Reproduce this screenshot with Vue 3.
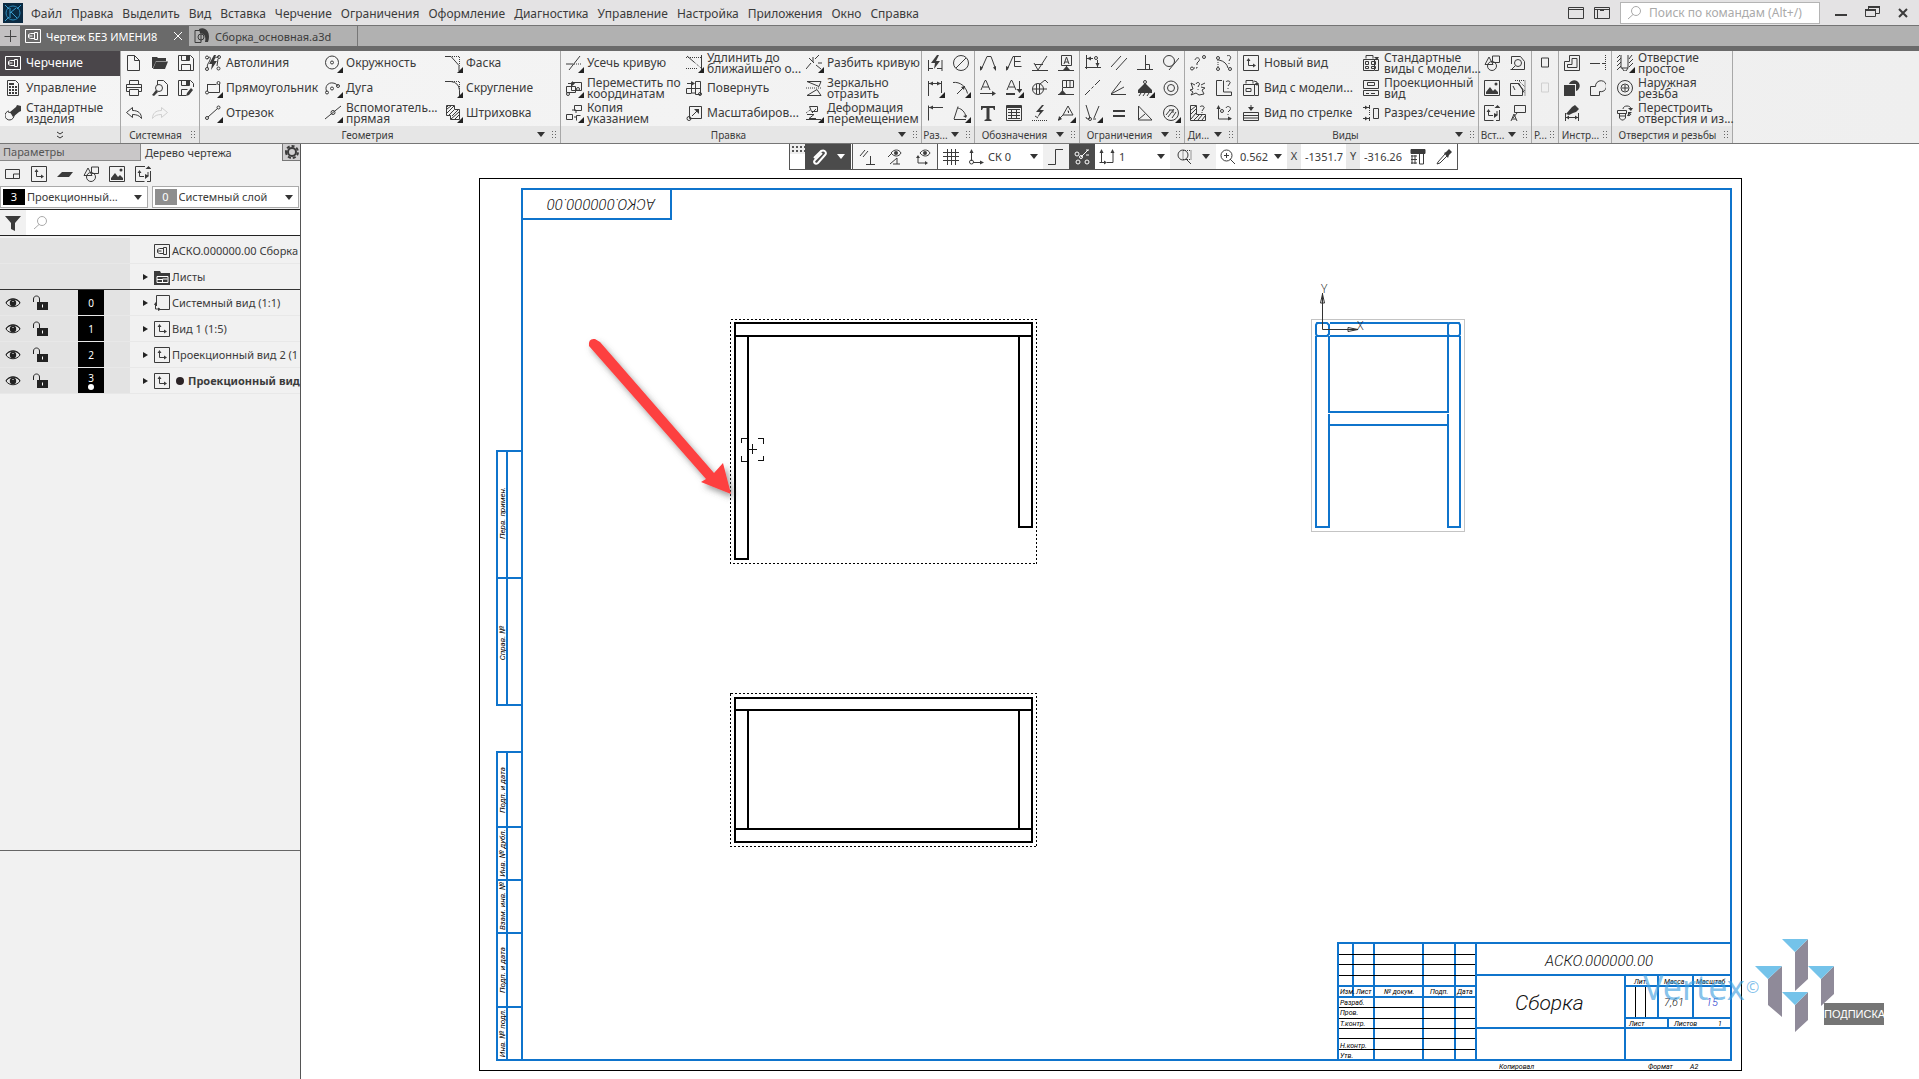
<script setup>
import { h } from 'vue'

const ring = (x, y, r) => `M${x - r} ${y}a${r} ${r} 0 1 0 ${2 * r} 0a${r} ${r} 0 1 0 ${-2 * r} 0`
const box = (x, y, w, t) => `M${x} ${y}h${w}v${t}h${-w}z`

/* Each icon lives on a 16 x 16 grid: s = stroked path, f = filled path, d = dashed path, w = white path */
const icons = {
  draft: { s: box(0.5, 1.5, 15, 13) + 'M9.5 5.5h-4l-2 1v3l2 1h4M3.5 8h4' + box(9.5, 4.5, 3, 7) },
  calc: { s: 'M2.5.5h8l3 3v12h-11z', f: box(4, 3, 5, 2) + [6, 9, 12].map(y => box(4, y, 2, 2) + box(7, y, 2, 2) + box(10, y, 2, 2)).join('') },
  bolt: { s: 'M4 6a4.5 4.5 0 1 0 5 4l-2-2-4-1', f: 'M5 7l6-5 1-2 4 1v5l-2 1-6 5z' },
  page: { s: 'M1.5.5h7l5 5v10h-12zM8.5.5v5h5' },
  folder: { f: 'M0 2h5l1 1h8v3H4L1 13H0zM4 6.5h12L13 14H1z' },
  save: { s: 'M.5.5h12l3 3v12H.5zM3.5.5v5h8v-5M3.5 15.5v-6h9v6', f: box(8, 1, 3, 4) },
  print: { s: 'M3.5 4.5v-4h9v4M3.5 11.5h-3v-7h15v7h-3' + box(3.5, 9.5, 9, 6) + 'M1 7.5h14' },
  preview: { s: 'M5.5 5V.5h6l4 4v11h-9' + ring(7, 8, 3.5), f: 'M4 10l2 2-4 4-2-1z' },
  saveas: { s: 'M8 15.5H.5V.5h12l3 3V7M3.5.5v5h8v-5M3.5 15.5v-6h6', f: box(8, 1, 3, 4) + 'M8 16l1-3 4-5 2 2-4 5z' },
  undo: { s: 'M6.5 2.5l-6 5 6 5v-3c4 0 7 1 9 4 0-5-3-8-9-8z' },
  redo: { s: 'M9.5 2.5l6 5-6 5v-3c-4 0-7 1-9 4 0-5 3-8 9-8z' },
  auto: { s: 'M2 4c3-3 4-2 3 1s-4 5-2 8M9 3c2 0 4-2 5-1' + ring(2, 2.5, 1.5) + ring(14, 2, 1.5) + ring(2, 14, 1.5) + ring(13.5, 13.5, 1.5) + 'M13 4l-1 7', f: 'M9 0L4 9h3l-1 6 6-9H9l2-6z' },
  rect: { s: 'M2 4.5h9.5M3.5 12.5H14.5V4M2.5 4v7' + ring(13.5, 3, 1.5) + ring(2, 12.5, 1.5) },
  line: { s: ring(2, 13, 1.5) + ring(13.5, 2.5, 1.5) + 'M3 12L12.5 3.5' },
  circle: { s: ring(7, 7.5, 6.5) + ring(7, 7.5, 1.5) },
  arc: { s: 'M2 12C-1 7 3 2 8 3c3 0 5 3 5 3' + ring(7, 8.5, 1.5) + ring(2, 12.5, 1.5) + ring(13, 6, 1.5) },
  aux: { s: 'M0 14L16 1' + ring(8, 7.5, 2) },
  fillet: { s: 'M0 1.5h6l8 9V16', d: 'M7 1.5h7.5v9' },
  round: { s: 'M0 1.5h6q8 1 8.5 9V16', d: 'M7 1.5h7.5v9' },
  hatch: { s: 'M1.5.5h8v4h5v10h-9v-4h-4zM2 4l4-3M2 8l7-7M4 10l5-5M7 11l6-6M6 14l8-7M9 15l5-5M3 1l-1 1' },
  trim: { s: 'M0 9h7M3 15L14 1', d: 'M8 9h8' },
  extend: { s: 'M1 1l7 6M15.5 0v15', d: 'M8 7l7 6M0 2.5h15M0 13.5h12' },
  split: { s: 'M0 14l5-6M9 4l4-4M8 8l-5-5M12 8h4M10 10l5 4M7 7v-5' },
  move: { s: 'M5.5 2.5h10v8h-10zM.5 6.5h9v6h-9z' + ring(2, 14, 1.5) + ring(12, 9, 1.5), f: 'M2 3h4V1l3 2.5L6 6V4H2z' },
  copy: { s: box(8.5, 0.5, 7, 5) + 'M10 8v-3h-4' + box(0.5, 9.5, 6, 5) + 'M14.5 10.5h-4v5M8 12h3' },
  rotate: { s: 'M9.5 1.5h5v13h-5zM.5 8.5h14M5.5 13.5h-5v-5M5.5 4v9h4' + ring(14, 14, 1.5), f: 'M1 3h4V1l4 2.5L5 6V4H1z' },
  scale: { s: box(3.5, 1.5, 12, 12) + ring(3, 13.5, 2) + 'M6 11l6-6', f: 'M8 4h5v5z' },
  mirror: { s: 'M1 1.5h14l-2 5zM1 15.5h14l-4-6z', d: 'M0 8h16' },
  deform: { s: 'M3.5 1.5h8v5h-6zM0 14.5h15M1 9.5h7l-5 4h7M6 8l4-4', d: 'M0 8l4-3' },
  adim: { s: 'M1.5 5v11M15 5v11M2 13.5h4M10 13.5h5', f: 'M10 0L4 8h4l-1 6 6-8H9l3-6z' },
  diam: { s: ring(8, 8, 7.5) + 'M3 13L13 3' },
  dim: { s: 'M1.5 1v15M14.5 1v12M2 3.5h12', f: 'M2 3.5l4-2v4zM14 3.5l-4-2v4z' },
  radius: { s: 'M0 2.5c7-1 13 4 14.5 11M4 14L12 6', f: 'M12 6l-1 4-3-3z' },
  linedim: { s: 'M1.5.5v15M2 2.5h14', f: 'M2 2.5l4-2v4z' },
  angle: { s: 'M1 14.5h12M1 14L5 1.5M5 3c4 1 7 4 8 9', f: 'M13 13l-3-2 4-1z' },
  leader: { s: 'M1 15L7 1.5h4L16 15', f: 'M0 16v-5l3 1.5zM16 16v-5l-3 1.5z' },
  markE: { s: 'M1 15L7 1.5h8M8.5 1.5v10h7M8.5 6.5h6', f: 'M0 16v-5l3 1.5z' },
  rough: { s: 'M0 15.5h16M2 8l4 7 9-14M3 9.5h8' },
  baseA: { s: box(3.5, 0.5, 10, 10) + 'M8.5 11v3M0 15.5h16M6 9l2.5-7 2.5 7M7 7h3', f: 'M5 15l3.5-4 3.5 4z' },
  textA: { s: 'M1 10L5 .5h1L10 10M3 7h6M0 13.5h13', f: 'M16 13.5l-4-2.5v5z' },
  textAd: { s: 'M1 10L5 .5h1L10 10M3 7h6M13.5 1v10', f: 'M13.5 13l-3-4h6z' + box(0, 13, 9, 2) },
  weld: { s: ring(6, 9, 5.5) + 'M1 9h10M4.5 4v10M7.5 4v10M8 4l5-4 3 3M11 9h4' },
  tol: { s: box(4.5, 0.5, 11, 7) + 'M8.5 1v7M12 1v7M4.5 8v5M0 14.5h16', f: 'M1 14l3.5-4L8 14z' },
  T: { f: 'M1 1h14v4h-1l-1-2H9.5v11l2 1v1h-7v-1l2-1V3H3L2 5H1z' },
  table: { s: box(0.5, 0.5, 15, 15) + 'M2 4.5h12M2 7.5h12M2 10.5h12M2 13.5h12M5.5 4v10M10.5 4v10', f: box(1, 1, 14, 2) },
  flash: { f: 'M10 0L4 7h4l-3 6 7-8H8l4-5z', d: 'M0 15.5h16', s: 'M3 11l3 2' },
  posA: { s: 'M5 10l5-9 5 9zM5 10l-5 5M9.5 6h1v2', f: 'M0 16l1-5 3 3z' },
  cdim: { s: 'M1.5 0v14M2 3.5h6M0 12.5h16' + ring(11, 3, 1.5) + 'M12.5 5v7', f: 'M2 3.5l4-2v4zM12.5 12l-2-4h4z' },
  par: { s: 'M0 12L10 1M5 15L16 3' },
  perp: { s: 'M8.5 0v14M0 14.5h16M8.5 9.5h4v5' },
  tang: { s: ring(6, 6, 5.5) + 'M6 15L16 3' },
  col: { s: 'M0 15l5-5M6.5 8.5l2-2M10 5l5-5' },
  fan: { s: 'M0 14.5h15M0 14L13 7M0 14L10 1' },
  ground: { s: 'M2 16l2-3M6 16l2-3M10 16l2-3' + ring(8, 2, 1.5), f: 'M8 3l7 7v3H1v-3z' },
  conc: { s: ring(8, 8, 7) + ring(8, 8, 3.5) },
  sym: { s: 'M1 0l4 13M14 1L9 13M1 12a2 2 0 1 0 4 0M8 14h3' + ring(5, 14, 1.5) },
  equal: { f: box(2, 5, 12, 2) + box(2, 10, 12, 2) },
  tri: { s: 'M1.5 1v14H15zM2 14l6-5' },
  hcirc: { s: ring(8, 8, 7.5) + 'M3 10l4-5M5 12l6-8M9 13l4-6M6 5h4v3' },
  q1: { s: ring(2, 13.5, 1.5) + ring(14, 2, 1.5) + 'M5 5c1-4 6-2 4 1L7 8v2M7 12v1', d: 'M4 13h3' },
  q2: { s: ring(2, 3, 1.5) + ring(2, 14, 1.5) + ring(14, 14, 1.5) + 'M3 5c5 1 8 4 9 8M11 1c2-2 5 1 3 3l-1 2M13 8v1', d: 'M2 5v7' },
  q3: { s: 'M1 3l4 2M15 3l-4 2M1 15l5-2 3 2 5-1-2-4 3-2-4-1M1 3l2 6-3 1 3 2-2 3M6 4c1-3 5-1 3 1L8 7M8 9v1' },
  q4: { s: 'M6 .5H.5v15h15V12h-8V.5M10 2c1-2 5-1 4 1l-2 3M12 8v1' },
  q5: { s: 'M.5.5h6v9h9v6H.5zM1 5l5-4M1 9l5-5M1 14l5-6M4 15l5-5M8 15l4-5M12 15l3-4M10 2c1-2 5-1 4 1l-2 3M12 7v1' },
  q6: { s: 'M2.5 2v12H15M10 3c1-3 6-1 4 2l-2 2M12 9v1' + ring(6, 6, 1.5), f: 'M2.5 0l2 4h-4zM16 13.5l-4-2v4z' },
  view: { s: box(0.5, 0.5, 15, 15) + 'M5.5 5v5.5H11', f: 'M5.5 3l2 3h-4zM13 10.5l-3-2v4z' },
  model: { s: 'M3 3.5V.5h7v3M.5 4.5h11v11H.5zM11 4.5h4.5v11H12M3 8.5h5v3H3zM11 1l3 1v3', f: 'M14 6l-2-3h4z' },
  stdviews: { s: 'M3 3.5V.5h7v3M.5 4.5h11v11H.5zM11 4.5h4.5v11H12' + box(2.5, 6.5, 3, 3) + box(8.5, 6.5, 4, 3) + box(2.5, 11.5, 3, 2) + box(8.5, 11.5, 4, 2), f: 'M14 5l-3-3h5z' },
  proj: { s: box(0.5, 0.5, 15, 8) + box(4.5, 2.5, 7, 3) + box(0.5, 10.5, 15, 5) + 'M3 13.5h3M8 13.5h4' },
  arrowview: { s: 'M8 0v5' + box(0.5, 7.5, 15, 8) + 'M0 10.5h16M0 13h16', f: 'M8 6L5 2h6z' },
  section: { s: 'M6.5 0v4M6.5 12v4M0 2.5h6M0 13.5h6' + box(10.5, 3.5, 5, 10), f: 'M5 2.5l-3-2v4zM5 13.5l-3-2v4z', d: 'M6.5 5v6' },
  shapes: { s: 'M1 9.5L5 2l4 7.5z' + box(8.5, 1, 7, 6.5) + ring(8, 11, 4.5) },
  zoomdet: { s: 'M1.5 9V1.5h9l4 5v8h-14' + ring(8, 8, 3.5) + 'M5 11l-4 4' },
  image: { s: box(0.5, 0.5, 15, 15), f: 'M2 14V12l4-5 3 4 2-2 3 3v2z' + ring(12, 4, 1.5) },
  cutout: { s: 'M9 3.5H.5v12h12V9L9 5zM9 3.5l5 9M3 6l2 4', d: 'M5 .5h10v15M7 3l8 8M9 1l6 6' },
  sheetview: { s: 'M10 .5H.5v15h9M15.5 5v10.5H12M4.5 6v4.5H9M11 10h2V6', f: 'M4.5 4l2 3h-4zM13.5 0l3 3h-6zM10 8l4 2-4 3z' },
  callout: { s: box(4.5, 0.5, 11, 7) + 'M7 8l-4 5M1 16l3-7 3 7M2 14h4' },
  slot: { s: box(4.5, 3, 7, 9) },
  slotoff: { s: box(4.5, 3, 7, 9) },
  lshape: { s: 'M5.5.5h10v15H.5v-9h5zM8 3.5h5v9H3.5v-3H8z' },
  cline: { s: 'M0 8.5h10M12 8.5h4', d: 'M15.5 0v16' },
  boolf: { f: box(0, 5, 11, 11) + 'M5 4a5.5 5.5 0 1 1 7 7V4z' },
  union: { s: 'M5.5 6.5H.5v9h9v-4a5.5 5.5 0 1 0-4-5z' },
  measure: { s: 'M1.5 8v8M14.5 8v8M2 12.5h12', f: 'M2 9l6-7 3-2 4 4-3 3-3 1-4 2zM2 12.5l3-2v4zM14 12.5l-3-2v4z' },
  hole: { s: 'M4 0v13h7V0M0 3l3-3M0 7l4-4M0 11l4-4M0 15l4-4M12 4l3-4M12 8l4-4M12 12l4-4M5 13l2 3h2l2-3' },
  thread: { s: ring(8, 8, 7.5) + ring(8, 8, 4) + 'M8 5v6M5 8h6' },
  rebuild: { s: box(0.5, 5.5, 9, 3) + 'M2.5 9v4l2 2h2l2-2V9M2 11h6M6 4c0-4 8-4 8 0M14 9c-1 2-3 2-4 1', f: 'M14 6l-3-3h5zM11 7h4l-4 4z' },
  sheet: { s: 'M.5 3.5h14v9H.5zM8.5 12v-4h6' },
  layer: { f: 'M0 11l5-5h11l-4 5z' },
  sysview: { s: 'M2.5 11V.5h13v14H5M1.5 8v6H6', f: 'M1.5 7l1.5 3H0zM7 14.5l-3-2v3.5z' },
  folderdoc: { f: 'M0 2h6l1 2h9v12H0z', w: 'M3 7.5h11v6H3zM3 10.5h5M8.5 13v-3h5' },
  filter: { f: 'M0 1h16l-6 7v8l-4-2V8z' },
  search: { s: ring(9, 6, 4.5) + 'M6 9.5L1 14' },
  gear: { s: ring(8, 8, 4), d: ring(8, 8, 6), thick: 1 },
  eye: { s: 'M1 8C4 3 12 3 15 8 12 13 4 13 1 8zM1 7.5C4 2.5 12 2.5 15 7.5', f: ring(8, 8, 3.2), w: 'M7.5 6.5h1' },
  lock: { s: 'M1.5 7V4c0-4 6-4 6 0v3', f: box(5, 7, 11, 8), w: 'M10.5 9.5v3' },
  asm: { s: 'M1 2.5h6v12H1z' + ring(7, 9, 3), f: 'M5 1c8-3 12 5 9 13h-3c1-5 0-8-5-9z' },
  clip: { s: 'M2 9l7-7c4-2 6 2 4 4l-7 8c-3 2-5-1-3-3l7-7', thick: 1 },
  snap1: { s: 'M1 7l5-6M4 8l5-6M11.5 7v8M7 15.5h9' },
  snap2: { s: 'M4 4c3-4 8-4 10 0-2 4-7 4-10 0M3 15l7-6M10 9v6M6 15h7M1 8l4-4', f: ring(9, 4, 2) },
  snap3: { s: 'M5 4c3-4 8-4 10 0-2 4-7 4-10 0M3 8v6h8', f: ring(10, 4, 2) + 'M13 14l-3-2v4zM3 6l2 3H1z' },
  grid: { s: 'M4.5 0v16M8.5 0v16M12.5 0v16M0 3.5h16M0 7.5h16M0 11.5h16' },
  axes: { s: 'M3.5 2v10M5 13.5h9' + ring(3.5, 13, 2), f: 'M3.5 0l2 4h-4zM16 13.5l-4-2v4z' },
  step: { s: 'M0 15.5h7.5V.5H15' },
  nodes: { s: ring(3, 5, 2) + ring(4, 13, 2) + ring(13, 13, 2) + ring(7, 8, 1.5) + 'M7 8L14 1M12 1h3M12 6h3' },
  snapv: { s: 'M2.5 3v10M8 13.5h6V3M.5 13.5h5', f: 'M2.5 0l2 4h-4zM13.5 0l2 4h-4zM8 13.5l-3-2v4z' },
  zoomwin: { s: ring(6, 6, 5) + 'M9 10l5 5', d: box(6, 1.5, 8, 9) },
  zoomin: { s: ring(6.5, 6.5, 5.5) + 'M10 10l5 5M6.5 4v5M4 6.5h5' },
  calc2: { s: 'M1 .5h14v4H1zM1 7h6M1 10.5h6M1 14h6M2 6v9M5 6v9M9.5 4v11h4V4', f: box(1, 1, 14, 3) },
  dropper: { s: 'M9 5l-7 8-1 2 3-1 7-7', f: 'M8 4l2-1 3-3 3 3-3 3-1 3z' },
  close: { s: 'M4 4l8 8M12 4l-8 8' },
  plus: { s: 'M8.5 2v12M2.5 8.5h12' },
  min: { f: box(2, 9, 12, 2) },
  restore: { s: 'M4.5 4V1.5h11v7H12' + box(1.5, 4.5, 10, 7), f: box(4, 1, 12, 2) + box(1, 4, 11, 2) },
  bigx: { s: 'M4 4l8 8M12 4l-8 8', thick: 1 },
  win1: { s: box(0.5, 2.5, 15, 11) + 'M0 4.5h16' },
  win2: { s: box(0.5, 2.5, 15, 11) + 'M0 4.5h16M3.5 5v8', f: box(6, 4, 4, 2) },
}

const Icon = ({ name }) => {
  const i = icons[name]
  const line = (d, extra) => d && h('path', { d, fill: 'none', stroke: 'currentColor', 'stroke-width': i.thick ? 2 : 1, ...extra })
  return h('svg', { viewBox: '0 0 16 16', width: 16, height: 16, 'aria-hidden': 'true' }, [
    i.f && h('path', { d: i.f, fill: 'currentColor' }),
    line(i.s),
    line(i.d, { 'stroke-dasharray': i.thick ? '3 2' : '1 1' }),
    line(i.w, { stroke: '#fff' }),
  ])
}
Icon.props = ['name']

const menu = ['Файл', 'Правка', 'Выделить', 'Вид', 'Вставка', 'Черчение', 'Ограничения', 'Оформление', 'Диагностика', 'Управление', 'Настройка', 'Приложения', 'Окно', 'Справка']
const modes = [['draft', 'Черчение'], ['calc', 'Управление'], ['bolt', 'Стандартные\nизделия']]

/* name, menu arrow, columns; a column holds three [icon, caption, flyout, disabled] entries */
const groups = [
  { name: 'Системная', cols: [[['page'], ['print'], ['undo']], [['folder'], ['preview'], ['redo', '', 0, 1]], [['save'], ['saveas']]] },
  { name: 'Геометрия', arrow: 1, cols: [
    [['auto', 'Автолиния'], ['rect', 'Прямоугольник', 1], ['line', 'Отрезок', 1]],
    [['circle', 'Окружность', 1], ['arc', 'Дуга', 1], ['aux', 'Вспомогатель...\nпрямая', 1]],
    [['fillet', 'Фаска', 1], ['round', 'Скругление', 1], ['hatch', 'Штриховка', 1]]] },
  { name: 'Правка', arrow: 1, cols: [
    [['trim', 'Усечь кривую', 1], ['move', 'Переместить по\nкоординатам', 1], ['copy', 'Копия\nуказанием', 1]],
    [['extend', 'Удлинить до\nближайшего о...', 1], ['rotate', 'Повернуть'], ['scale', 'Масштабиров...']],
    [['split', 'Разбить кривую', 1], ['mirror', 'Зеркально\nотразить'], ['deform', 'Деформация\nперемещением', 1]]] },
  { name: 'Раз...', arrow: 1, cols: [[['adim'], ['dim', '', 1], ['linedim']], [['diam'], ['radius', '', 1], ['angle', '', 1]]] },
  { name: 'Обозначения', arrow: 1, cols: [[['leader'], ['textA'], ['T']], [['markE'], ['textAd', '', 1], ['table']], [['rough'], ['weld'], ['flash']], [['baseA'], ['tol'], ['posA', '', 1]]] },
  { name: 'Ограничения', arrow: 1, cols: [[['cdim'], ['col'], ['sym', '', 1]], [['par'], ['fan'], ['equal']], [['perp'], ['ground', '', 1], ['tri']], [['tang'], ['conc'], ['hcirc', '', 1]]] },
  { name: 'Ди...', arrow: 1, cols: [[['q1'], ['q3'], ['q5']], [['q2'], ['q4'], ['q6']]] },
  { name: 'Виды', arrow: 1, cols: [
    [['view', 'Новый вид'], ['model', 'Вид с модели...'], ['arrowview', 'Вид по стрелке']],
    [['stdviews', 'Стандартные\nвиды с модели...'], ['proj', 'Проекционный\nвид'], ['section', 'Разрез/сечение']]] },
  { name: 'Вст...', arrow: 1, cols: [[['shapes'], ['image'], ['sheetview']], [['zoomdet'], ['cutout'], ['callout']]] },
  { name: 'Р...', cols: [[['slot'], ['slotoff', '', 0, 1]]] },
  { name: 'Инстр...', cols: [[['lshape'], ['boolf'], ['measure']], [['cline'], ['union']]] },
  { name: 'Отверстия и резьбы', cols: [[['hole', 'Отверстие\nпростое', 1], ['thread', 'Наружная\nрезьба'], ['rebuild', 'Перестроить\nотверстия и из...']]] },
]

const panelTools = ['sheet', 'view', 'layer', 'shapes', 'image', 'sheetview']
const tree = [
  { icon: 'draft', text: 'АСКО.000000.00 Сборка' },
  { icon: 'folderdoc', text: 'Листы', open: 1, last: 1 },
  { icon: 'sysview', text: 'Системный вид (1:1)', open: 1, num: '0' },
  { icon: 'view', text: 'Вид 1 (1:5)', open: 1, num: '1' },
  { icon: 'view', text: 'Проекционный вид 2 (1', open: 1, num: '2' },
  { icon: 'view', text: 'Проекционный вид', open: 1, num: '3', current: 1 },
]

const stamps = [[513, 'Перв. примен.'], [643, 'Справ. №'], [790, 'Подп. и дата'], [853, 'Инв. № дубл.'], [906, 'Взам. инв. №'], [970, 'Подп. и дата'], [1033, 'Инв. № подл.']]
const smallTexts = [
  [1340, 994, 'Изм.'], [1356, 994, 'Лист'], [1384, 994, '№ докум.'], [1430, 994, 'Подп.'], [1457, 994, 'Дата'],
  [1340, 1005, 'Разраб.'], [1340, 1015, 'Пров.'], [1340, 1026, 'Т.контр.'], [1340, 1048, 'Н.контр.'], [1340, 1058, 'Утв.'],
  [1634, 984, 'Лит.'], [1664, 984, 'Масса'], [1696, 984, 'Масштаб'], [1629, 1026, 'Лист'], [1674, 1026, 'Листов'], [1718, 1026, '1'],
  [1499, 1069, 'Копировал'], [1648, 1069, 'Формат'], [1690, 1069, 'А2'],
]
const rowLines = [954, 964, 975, 1007, 1018, 1028, 1038, 1049]
</script>

<template>
  <div class="app">
    <header class="menubar">
      <svg class="logo" viewBox="0 0 20 20" width="20" height="20" aria-hidden="true">
        <rect width="20" height="20" fill="#0b2a42" />
        <circle cx="10" cy="10" r="7" fill="none" stroke="#2b87b8" />
        <path d="M7 5v10M7 10l6-5M8 9l6 6M2 2l4 4M18 2l-4 4M2 18l4-4" fill="none" stroke="#3a9fd0" />
      </svg>
      <nav class="menu"><a v-for="m in menu" :key="m" href="#">{{ m }}</a></nav>
      <button class="plain" aria-label="Окно"><Icon name="win1" /></button>
      <button class="plain" aria-label="Панели"><Icon name="win2" /></button>
      <label class="command"><Icon name="search" /><input type="text" aria-label="Поиск" placeholder="Поиск по командам (Alt+/)"></label>
      <div class="wincontrols">
        <button class="plain" aria-label="Свернуть"><Icon name="min" /></button>
        <button class="plain" aria-label="Восстановить"><Icon name="restore" /></button>
        <button class="plain" aria-label="Закрыть"><Icon name="bigx" /></button>
      </div>
    </header>

    <div class="tabs">
      <button class="add" aria-label="Новый"><Icon name="plus" /></button>
      <button class="tab active"><Icon name="draft" /><span>Чертеж БЕЗ ИМЕНИ8</span><Icon name="close" /></button>
      <button class="tab"><Icon name="asm" /><span>Сборка_основная.a3d</span></button>
    </div>

    <div class="ribbon">
      <section class="group modes">
        <div class="body">
          <div class="col wide">
            <button v-for="(m, i) in modes" :key="i" class="tool" :class="{ chosen: i === 0 }">
              <span class="ico"><Icon :name="m[0]" /></span><span class="cap">{{ m[1] }}</span>
            </button>
          </div>
        </div>
        <button class="foot more" aria-label="Ещё"><svg width="8" height="8" viewBox="0 0 8 8"><path d="M1 1l3 2 3-2M1 5l3 2 3-2" fill="none" stroke="#333" /></svg></button>
      </section>
      <section v-for="g in groups" :key="g.name" class="group">
        <div class="body">
          <div v-for="(c, ci) in g.cols" :key="ci" class="col" :class="{ wide: c[0][1] }">
            <button v-for="t in c" :key="t[0]" class="tool" :class="{ off: t[3] }" :aria-label="t[1] || t[0]">
              <span class="ico" :class="{ fly: t[2] }"><Icon :name="t[0]" /></span><span v-if="t[1]" class="cap">{{ t[1] }}</span>
            </button>
          </div>
        </div>
        <div class="foot"><span class="name">{{ g.name }}</span><i v-if="g.arrow" class="arrow" /><i class="grip" /></div>
      </section>
    </div>

    <main class="work">
      <aside class="panel">
        <div class="ptabs">
          <button class="ptab idle">Параметры</button>
          <button class="ptab">Дерево чертежа</button>
          <button class="gear" aria-label="Настройка"><Icon name="gear" /></button>
        </div>
        <div class="ptools"><button v-for="t in panelTools" :key="t" class="plain" :aria-label="t"><Icon :name="t" /></button></div>
        <div class="combos">
          <label class="combo"><b>3</b><select aria-label="Вид"><option>Проекционный...</option></select><i class="arrow" /></label>
          <label class="combo"><b class="grey">0</b><select aria-label="Слой"><option>Системный слой</option></select><i class="arrow" /></label>
        </div>
        <div class="filter">
          <button class="plain" aria-label="Фильтр"><Icon name="filter" /></button>
          <label class="find"><Icon name="search" /><input type="text" aria-label="Найти"></label>
        </div>
        <ul class="tree">
          <li v-for="r in tree" :key="r.text" :class="{ last: r.last }">
            <span class="flags">
              <template v-if="r.num">
                <button class="plain" aria-label="Видимость"><Icon name="eye" /></button>
                <button class="plain" aria-label="Блокировка"><Icon name="lock" /></button>
                <span class="num">{{ r.num }}<i v-if="r.current" /></span>
              </template>
            </span>
            <span class="twist"><i v-if="r.open" /></span>
            <Icon :name="r.icon" />
            <span class="label" :class="{ bold: r.current }"><i v-if="r.current" />{{ r.text }}</span>
          </li>
        </ul>
        <div class="rest" />
        <div class="bottom" />
      </aside>

      <div class="canvas">
        <div class="quick">
          <i class="dots" />
          <button class="q dark magnet" aria-label="Привязки"><Icon name="clip" /><i class="arrow" /></button>
          <span class="set">
            <button class="q" aria-label="Ортогонально"><Icon name="snap1" /></button>
            <button class="q" aria-label="Привязка"><Icon name="snap2" /></button>
            <button class="q" aria-label="Оси"><Icon name="snap3" /></button>
          </span>
          <button class="q" aria-label="Сетка"><Icon name="grid" /></button>
          <label class="qc"><Icon name="axes" /><select class="w38" aria-label="СК"><option>СК 0</option></select><i class="arrow" /></label>
          <button class="q tint" aria-label="Шаг"><Icon name="step" /></button>
          <button class="q dark" aria-label="Узлы"><Icon name="nodes" /></button>
          <label class="qc"><Icon name="snapv" /><select class="w34" aria-label="Шаг курсора"><option>1</option></select><i class="arrow" /></label>
          <button class="q tint zoomw" aria-label="Масштаб рамкой"><Icon name="zoomwin" /><i class="arrow" /></button>
          <label class="qc"><Icon name="zoomin" /><input class="w30" value="0.562" aria-label="Масштаб"><i class="arrow" /></label>
          <label class="xy"><span>X</span><input class="w38" value="-1351.7"></label>
          <label class="xy"><span>Y</span><input class="w38" value="-316.26"></label>
          <button class="q" aria-label="Параметры"><Icon name="calc2" /></button>
          <button class="q" aria-label="Пипетка"><Icon name="dropper" /></button>
        </div>

        <svg class="drawing" viewBox="301 144 1618 935">
          <defs>
            <filter id="shade" x="-20%" y="-20%" width="140%" height="140%"><feDropShadow dx="3" dy="4" stdDeviation="3" flood-color="#555" flood-opacity=".6" /></filter>
          </defs>
          <rect class="thin" x="479.5" y="178.5" width="1262" height="892" />
          <g class="blue">
            <path d="M522 189H1731V1060H522zM522 219H671V189" />
            <path d="M522 451H497V705H522M507 451V705M497 578H522M522 752H497V1060H522M507 752V1060M497 827H522M497 880H522M497 933H522M497 1007H522" />
            <path d="M1338 1060V943H1731M1353 943V997M1374 943V1060M1423 943V1060M1455 943V1060M1476 943V1060M1338 986H1476M1338 997H1476M1476 975H1731M1625 975V1060M1625 986H1731M1625 1018H1731M1476 1028H1731M1658 975V1018M1693 975V1018M1668 1018V1028" />
            <path d="M1330 323H1448M1330 336H1448M1316 336V527H1329V414M1329 336V412H1448V336M1329 425H1448M1448 414V527H1460V336" />
          </g>
          <path class="knot" d="M1317 323h10l2 2v9l-2 2h-10l-1-2v-9zM1449 323h10l1 2v9l-1 2h-10l-1-2v-9z" />
          <path class="thin" d="M1635.5 987V1017M1645.5 987V1017" />
          <path v-for="y in rowLines" :key="y" class="thin" :d="`M1339 ${y}.5H1475`" />
          <g class="black">
            <path d="M735 323H1032V336H735zM735 336V559H748V336M1019 336V527H1032V336" />
            <path d="M735 698H1032V842H735zM735 710H1032M735 829H1032M748 710V829M1019 710V829" />
          </g>
          <path class="dash" d="M730.5 319.5H1036.5V563.5H730.5zM730.5 693.5H1036.5V846.5H730.5z" />
          <rect class="pale" x="1311.5" y="319.5" width="153" height="212" />
          <path class="axis" d="M1322.5 329.5V293M1322.5 329.5H1358M1322.5 294l-2 9h4zM1358 329.5l-10-2v4z" />
          <path class="cursor" d="M741.5 443v-5h5M758 438.5h5.5v5M741.5 456v5h5M758 460.5h5.5v-5M752.5 444v10M748 449.5h9" />
          <path d="M589 346Q588 338 595 339L600 342L714 473L723 463L731 494L701 482L706 479z" fill="#fd4040" filter="url(#shade)" />

          <g class="gost">
            <text font-size="12" x="1321" y="293" class="plainfont">Y</text>
            <text font-size="12" x="1357" y="330" class="plainfont">X</text>
            <text font-size="15" transform="translate(655 199) rotate(180)">АСКО.000000.00</text>
            <text font-size="15" x="1545" y="966">АСКО.000000.00</text>
            <text font-size="21" x="1515" y="1010">Сборка</text>
            <text font-size="11" x="1664" y="1006">7,61</text>
            <text font-size="11" x="1706" y="1006" fill="#2233cc">15</text>
            <text v-for="t in smallTexts" :key="t.join()" class="small" font-size="7" :x="t[0]" :y="t[1]">{{ t[2] }}</text>
            <text v-for="s in stamps" :key="s[0]" class="small" font-size="8" text-anchor="middle" :transform="`translate(505 ${s[0]}) rotate(-90)`">{{ s[1] }}</text>
          </g>

          <g class="brand">
            <text font-size="34" x="1643" y="1000">Vertex</text>
            <text font-size="16" x="1746" y="993">©</text>
            <path fill="#8f8a99" d="M1808 939V979L1795 991V952zM1782 966V1017L1768 1005V979zM1834 966V994L1821 1006V979zM1808 992V1020L1795 1032V1005z" />
            <path fill="#74c3ea" d="M1782 939H1808L1795 952zM1755 966H1782L1768 979zM1808 966H1834L1821 979zM1782 992H1808L1795 1005z" />
          </g>
          <foreignObject x="1824" y="1003" width="60" height="22"><button class="subscribe">ПОДПИСКА</button></foreignObject>
        </svg>
      </div>
    </main>
  </div>
</template>

<style>
body { margin: 0; background: #fff; }
</style>

<style scoped>
.app { min-height: 100vh; display: flex; flex-direction: column; font: 12px/16px "Noto Sans", "Open Sans", sans-serif; color: #3b3b3b; }
.app * { box-sizing: border-box; }
button, input, select { font: inherit; color: inherit; border: 0; background: none; padding: 0; margin: 0; border-radius: 0; appearance: none; outline: 0; min-width: 0; }
svg { flex: none; display: block; }
.plain { display: flex; align-items: center; justify-content: center; }
.arrow { flex: none; width: 0; height: 0; border: 4px solid transparent; border-top: 5px solid #333; border-bottom: 0; }

.menubar { display: flex; align-items: center; height: 26px; padding: 0 8px 0 3px; background: #e4e3e4; border-bottom: 1px solid #747474; }
.menu { flex: 1; display: flex; gap: 9px; margin-left: 8px; padding-top: 3px; }
.menu a { color: inherit; text-decoration: none; }
.menubar > .plain { margin-right: 10px; }
.command { display: flex; align-items: center; gap: 6px; width: 200px; height: 22px; padding: 0 6px; background: #fff; border: 1px solid #b4b4b4; color: #aaa; }
.command input { flex: 1; }
.command input::placeholder { color: #aaa; opacity: 1; }
.wincontrols { display: flex; gap: 15px; margin-left: 13px; }

.tabs { display: flex; height: 25px; background: #b1b1b1; border-bottom: 5px solid #6a6a6a; font-size: 11px; }
.add { width: 20px; display: flex; align-items: center; justify-content: center; background: #c2c0c1; color: #444; }
.tab { display: flex; align-items: center; gap: 5px; width: 169px; padding: 0 5px; text-align: left; white-space: nowrap; border-right: 1px solid #777; }
.tab span { flex: 1; padding-top: 2px; }
.tab.active { background: #6a6a6a; color: #fff; border-right: 0; padding-right: 3px; }

.ribbon { display: flex; height: 93px; background: linear-gradient(90deg, #f5f5f5, #efefef); border-bottom: 1px solid #767676; }
.group { flex: none; display: flex; flex-direction: column; border-right: 1px solid #a8a8a8; }
.body { display: flex; height: 75px; }
.col { width: 26px; }
.col.wide { width: 120px; }
.tool { display: flex; align-items: center; width: 100%; height: 25px; padding-bottom: 2px; text-align: left; }
.tool.off { color: #d0d0d0; }
.tool.chosen { background: #4a464a; color: #fff; }
.ico { position: relative; flex: none; width: 26px; display: flex; justify-content: center; color: inherit; }
.ico.fly::after { content: ""; position: absolute; right: 3px; bottom: -2px; border: 3px solid transparent; border-right-color: #222; border-bottom-color: #222; }
.cap { white-space: pre; line-height: 11px; }
.foot { display: flex; align-items: center; height: 17px; width: 100%; padding-right: 4px; background: #e6e6e6; font-size: 10px; }
.foot .name { flex: 1; padding-top: 1px; text-align: center; white-space: nowrap; }
.foot .arrow { margin: 0 6px 0 2px; }
.grip { width: 5px; height: 9px; background: radial-gradient(circle, #666 1px, transparent 1px) 0 0 / 3px 3px; }
.foot.more { justify-content: center; padding: 0; }

.work { flex: 1; display: flex; }
.panel { flex: none; width: 301px; display: flex; flex-direction: column; overflow: hidden; background: #f1f1f1; border-right: 1px solid #555; font-size: 11px; }
.ptabs { display: flex; height: 17px; }
.ptab { flex: 1; padding-left: 4px; text-align: left; line-height: 16px; }
.ptab.idle { background: #c9c7c8; border-right: 1px solid #888; border-bottom: 1px solid #888; padding-left: 3px; color: #555; }
.gear { width: 18px; background: #d0cfd0; border: solid #777; border-width: 0 0 1px 1px; display: flex; align-items: center; justify-content: center; }
.ptools { display: flex; gap: 10px; height: 25px; padding: 0 5px; }
.combos { display: flex; gap: 4px; height: 24px; padding: 0 1px 1px 0; border-bottom: 1px solid #222; }
.combo { flex: 1; display: flex; align-items: center; gap: 2px; padding: 0 5px 0 2px; background: #fff; border: 1px solid #aaa; height: 22px; }
.combo b { width: 22px; line-height: 16px; text-align: center; font-weight: 400; background: #000; color: #fff; }
.combo b.grey { background: #8e8e8e; }
.combo select { flex: 1; }
.filter { display: flex; height: 26px; border-bottom: 1px solid #222; }
.filter > .plain { width: 26px; }
.find { flex: 1; display: flex; align-items: center; padding-left: 7px; background: #fff; color: #aaa; }
.tree { list-style: none; margin: 0; padding: 2px 0 0; }
.tree li { display: flex; align-items: center; height: 26px; white-space: nowrap; border-bottom: 1px solid #e8e8e8; }
.tree li.last { border-bottom: 1px solid #333; }
.flags { flex: none; display: flex; align-items: center; align-self: stretch; width: 130px; padding-left: 5px; gap: 11px; background: #e3e3e3; color: #222; }
.num { width: 26px; align-self: stretch; margin-left: 19px; display: flex; flex-direction: column; align-items: center; justify-content: center; background: #000; color: #fff; font-size: 10px; line-height: 12px; }
.num i { width: 6px; height: 6px; border-radius: 50%; background: #fff; }
.twist { flex: none; width: 24px; padding-left: 13px; }
.twist i { display: block; width: 0; border: 3px solid transparent; border-left: 5px solid #222; border-right: 0; }
.label { margin-left: 2px; }
.label.bold { font-weight: 700; }
.label i { display: inline-block; width: 8px; height: 8px; margin: 0 4px; border-radius: 50%; background: #2b2326; }
.rest { flex: 1; }
.bottom { height: 229px; border-top: 1px solid #666; }

.canvas { position: relative; flex: 1; min-width: 0; background: #fff; }
.drawing { width: 100%; height: auto; }
.quick { position: absolute; z-index: 1; left: 488px; top: 0; display: flex; align-items: stretch; height: 26px; background: #fff; border: 1px solid #555; border-width: 0 1px 1px; font-size: 11px; }
.dots { width: 15px; background: radial-gradient(circle, #555 1px, transparent 1px) 1px 1px / 4px 4px #eee; height: 10px; }
.q { width: 26px; display: flex; align-items: center; justify-content: center; }
.q.dark { background: #4b4b4b; color: #fff; }
.q.magnet { width: 46px; gap: 9px; }
.q.dark .arrow { border-top-color: #fff; }
.q.tint { background: #f0f0f0; }
.q.zoomw { width: 46px; gap: 9px; }
.set { display: flex; width: 86px; justify-content: space-around; margin-left: 1px; background: #f6f6f6; border: solid #555; border-width: 0 1px; }
.qc { display: flex; align-items: center; gap: 4px; padding: 0 5px 0 4px; }
.w38 { width: 38px; }
.w34 { width: 34px; }
.w30 { width: 30px; }
.xy { display: flex; align-items: center; gap: 4px; padding-right: 3px; }
.xy span { width: 14px; align-self: stretch; line-height: 24px; text-align: center; background: #e9e9e9; }

.blue, .black { fill: none; stroke-width: 2; shape-rendering: crispEdges; }
.blue { stroke: #0f74cc; }
.knot { fill: none; stroke: #0f74cc; stroke-width: 2; }
.black { stroke: #000; }
.thin { fill: none; stroke: #000; shape-rendering: crispEdges; }
.pale { fill: none; stroke: #c4c4c4; }
.dash { fill: none; stroke: #000; stroke-dasharray: 2 2; shape-rendering: crispEdges; }
.axis { fill: none; stroke: #333; }
.cursor { fill: none; stroke: #111; shape-rendering: crispEdges; }
.gost { font-family: Roboto, "Liberation Sans", sans-serif; font-style: italic; font-weight: 300; fill: #111; }
.small { font-weight: 400; fill: #000; }
.plainfont { font-family: "Open Sans", sans-serif; font-style: normal; }
.brand text { font-family: "Noto Sans", sans-serif; fill: #3fa0e0; fill-opacity: .65; }
.subscribe { display: block; width: 60px; height: 22px; background: #757575; color: #fff; font: 11px/22px "Liberation Sans", sans-serif; text-align: center; white-space: nowrap; }
</style>
